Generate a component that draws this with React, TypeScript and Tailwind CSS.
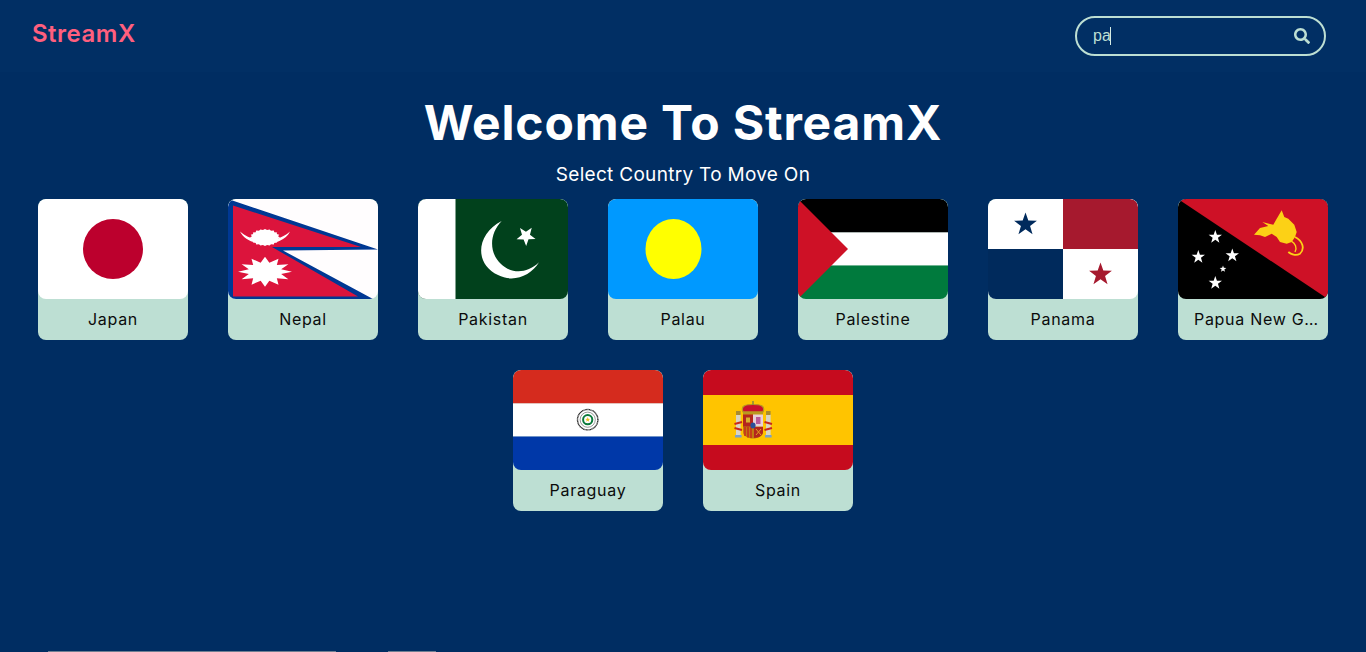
import React from 'react';
import { FaSearch } from 'react-icons/fa';

// star points, rx/ry differ because the flags are stretched to 3:2
const star = (cx: number, cy: number, rx: number, ry: number, n = 5, inner = 0.4, rot = 0) => {
  const pts: string[] = [];
  for (let i = 0; i < n * 2; i++) {
    const a = (i * Math.PI) / n - Math.PI / 2 + (rot * Math.PI) / 180;
    const k = i % 2 === 0 ? 1 : inner;
    pts.push(`${(cx + rx * k * Math.cos(a)).toFixed(2)},${(cy + ry * k * Math.sin(a)).toFixed(2)}`);
  }
  return pts.join(' ');
};

const Japan = () => (
  <>
    <rect width="150" height="100" fill="#fff" />
    <circle cx="75" cy="50" r="30" fill="#bc002d" />
  </>
);

const Nepal = () => (
  <>
    <rect width="150" height="100" fill="#fffdfe" />
    <polygon points="0,0 150,50.5 55,51.5 145,100 0,100" fill="#003893" />
    <polygon points="5,6.5 133,48 44,48 130,97.5 5,97.5" fill="#dc143c" />
    <polygon points={star(37, 38.5, 15, 8.5, 20, 0.88)} fill="#fff" />
    <path d="M12 32.5C20 49 54 49 62 32.5C54 39.5 46 41 37 41C28 41 20 39.5 12 32.5Z" fill="#fff" />
    <polygon points={star(37, 72.7, 27, 15, 12, 0.62)} fill="#fff" />
  </>
);

const Pakistan = () => (
  <>
    <rect width="150" height="100" fill="#01411c" />
    <rect width="37.5" height="100" fill="#fff" />
    <path d="M83.7 22C58 35 56 65 80 76C95 84 113 77 121 63.3C108 76 92 74 83 65C71 54 71 35 83.7 22Z" fill="#fff" />
    <polygon points={star(108, 37, 10, 10, 5, 0.42, 35)} fill="#fff" />
  </>
);

const Palau = () => (
  <>
    <rect width="150" height="100" fill="#0099ff" />
    <ellipse cx="65.5" cy="50" rx="28" ry="30" fill="#ffff00" />
  </>
);

const Palestine = () => (
  <>
    <rect width="150" height="33.5" fill="#000" />
    <rect y="33.5" width="150" height="33" fill="#fff" />
    <rect y="66.5" width="150" height="33.5" fill="#007a3d" />
    <polygon points="0,0 50,50 0,100" fill="#ce1126" />
  </>
);

const Panama = () => (
  <>
    <rect width="150" height="100" fill="#fff" />
    <rect x="75" width="75" height="50" fill="#a6192e" />
    <rect y="50" width="75" height="50" fill="#002a5c" />
    <polygon points={star(37.5, 25.5, 12, 12)} fill="#002a5c" />
    <polygon points={star(112.5, 75.5, 12, 12)} fill="#a6192e" />
  </>
);

const PapuaNewGuinea = () => (
  <>
    <rect width="150" height="100" fill="#000" />
    <polygon points="0,0 150,0 150,100" fill="#ce1126" />
    <polygon points={star(37.3, 38, 7, 7)} fill="#fff" />
    <polygon points={star(20.3, 58, 7, 7)} fill="#fff" />
    <polygon points={star(54.3, 56.5, 7, 7)} fill="#fff" />
    <polygon points={star(37.3, 84, 7, 7)} fill="#fff" />
    <polygon points={star(45, 70, 3.5, 3.5)} fill="#fff" />
    {/* bird of paradise */}
    <path
      d="M76 35.7L82 29L90.3 27L84.3 23L95.3 25.7L98.7 19.7L103.7 11.3L106.3 18L110.3 19.7L116.3 25.7L118.7 33L117 38L113.7 43L108.7 44.7L102 43L98.7 38L93.7 34.7L87 38L82 36.3Z"
      fill="#fcd116"
    />
    <path d="M117 38C125 42 127 50 122 54.7C118 57 113 55.5 110.3 53" fill="none" stroke="#fcd116" strokeWidth="1.8" />
    <path d="M113.7 42.3C117 44 119.5 49 117 53" fill="none" stroke="#fcd116" strokeWidth="1.4" />
  </>
);

const Paraguay = () => (
  <>
    <rect width="150" height="33.5" fill="#d52b1e" />
    <rect y="33.5" width="150" height="33" fill="#fff" />
    <rect y="66.5" width="150" height="33.5" fill="#0038a8" />
    <circle cx="74.7" cy="49.7" r="10.2" fill="#fff" stroke="#222" strokeWidth="1.4" strokeDasharray="1 0.4" />
    <circle cx="74.7" cy="49.7" r="7.6" fill="#fff" stroke="#555" strokeWidth="0.6" />
    <circle cx="74.7" cy="49.7" r="4.6" fill="#fff" stroke="#0b7a3b" strokeWidth="2" />
    <polygon points={star(74.7, 49.7, 2.6, 2.6)} fill="#e8c020" />
  </>
);

const Spain = () => (
  <>
    <rect width="150" height="100" fill="#c60b1e" />
    <rect y="25" width="150" height="50" fill="#ffc400" />
    {/* pillars */}
    <rect x="33" y="44" width="4.6" height="21" fill="#d8d4c4" />
    <rect x="63" y="44" width="4.6" height="21" fill="#d8d4c4" />
    <rect x="33" y="41" width="4.6" height="4" fill="#a98b2f" />
    <rect x="63" y="41" width="4.6" height="4" fill="#a98b2f" />
    <rect x="32" y="65" width="6.6" height="2.5" fill="#7aa0c8" />
    <rect x="62" y="65" width="6.6" height="2.5" fill="#7aa0c8" />
    <path d="M31.5 54L39 52M31.5 58L39 60M61.5 52L69 54M61.5 60L69 58" stroke="#c8281e" strokeWidth="2" />
    {/* crown */}
    <path d="M40 42C37 35 44 34.5 50 34.5C56 34.5 63 35 60 42Z" fill="#c8102e" stroke="#b99a20" strokeWidth="1.2" />
    <rect x="40" y="41.5" width="20" height="3" fill="#b99a20" />
    <rect x="49.2" y="31" width="1.6" height="4" fill="#8a8a40" />
    {/* shield */}
    <path d="M40 44.5H60V62C60 66 55 68.5 50 68.5C45 68.5 40 66 40 62Z" fill="#c07a10" />
    <rect x="40" y="44.5" width="10" height="12" fill="#b3261e" />
    <rect x="50" y="44.5" width="10" height="12" fill="#e8cfd8" />
    <rect x="53" y="47" width="4.5" height="7" fill="#b85a9a" />
    <path d="M42 57V66M45 57V67.5M48 57V68" stroke="#c8281e" strokeWidth="1.4" />
    <path d="M51 57H60V62C60 65 56 68 51 68Z" fill="#b3261e" />
    <path d="M53 59L58 65M58 59L53 65" stroke="#e0a020" strokeWidth="1" />
    <ellipse cx="50" cy="55.5" rx="2.6" ry="3" fill="#2a4f9a" />
    <rect x="43" y="47.5" width="4" height="5" fill="#d8b030" />
  </>
);

const countries: { name: string; Flag: React.FC }[] = [
  { name: 'Japan', Flag: Japan },
  { name: 'Nepal', Flag: Nepal },
  { name: 'Pakistan', Flag: Pakistan },
  { name: 'Palau', Flag: Palau },
  { name: 'Palestine', Flag: Palestine },
  { name: 'Panama', Flag: Panama },
  { name: 'Papua New Guinea', Flag: PapuaNewGuinea },
  { name: 'Paraguay', Flag: Paraguay },
  { name: 'Spain', Flag: Spain },
];

const App: React.FC = () => {
  return (
    <div className="h-[652px] overflow-hidden flex flex-col bg-[#002d62] font-['Inter','Liberation_Sans',sans-serif]">
      {/* Navbar */}
      <nav className="h-[72px] shrink-0 flex items-center justify-between pl-8 pr-10 bg-[#012f64]">
        <a className="text-2xl leading-none font-semibold text-[#ff5f7e] tracking-[0.5px] -mt-[4px]">StreamX</a>
        <div className="w-[251px] h-10 -mt-[1px] flex items-center border-2 border-[#bddfd3] rounded-[20px] pl-4 pr-[14px]">
          <input
            readOnly
            value="pa"
            className="w-[17px] bg-transparent outline-none text-base text-[#bddfd3] font-['Liberation_Sans',sans-serif]"
          />
          <span className="w-px h-[18px] bg-[#d5ece4]" />
          <span className="flex-1" />
          <FaSearch size={16} className="text-[#bddfd3]" />
        </div>
      </nav>

      {/* Heading */}
      <header className="text-center text-white pt-[21px]">
        <h1 className="text-5xl leading-[60px] font-bold tracking-[0.85px]">Welcome To StreamX</h1>
        <p className="text-[19px] leading-[27px] mt-[8px] tracking-[0.3px]">Select Country To Move On</p>
      </header>

      {/* Country cards */}
      <main className="flex flex-wrap justify-center gap-x-10 gap-y-[30px] mt-[11px] px-[38px]">
        {countries.map(({ name, Flag }) => (
          <div key={name} className="w-[150px] h-[141px] bg-[#bddfd3] rounded-lg overflow-hidden">
            <svg viewBox="0 0 150 100" preserveAspectRatio="none" className="block w-[150px] h-[100px] rounded-lg">
              <Flag />
            </svg>
            <p
              className={`pt-2 text-base leading-6 text-center truncate text-[#0b0b0b] tracking-[0.7px] ${
                name.length > 12 ? 'pl-4 pr-1' : 'px-4'
              }`}
            >
              {name}
            </p>
          </div>
        ))}
      </main>

      {/* next row of the page, just peeking above the fold */}
      <div className="mt-auto h-px flex pl-12">
        <div className="w-[288px] bg-[#6e7f92]" />
        <div className="w-12 ml-[52px] bg-[#6e7f92]" />
      </div>
    </div>
  );
};

export default App;
